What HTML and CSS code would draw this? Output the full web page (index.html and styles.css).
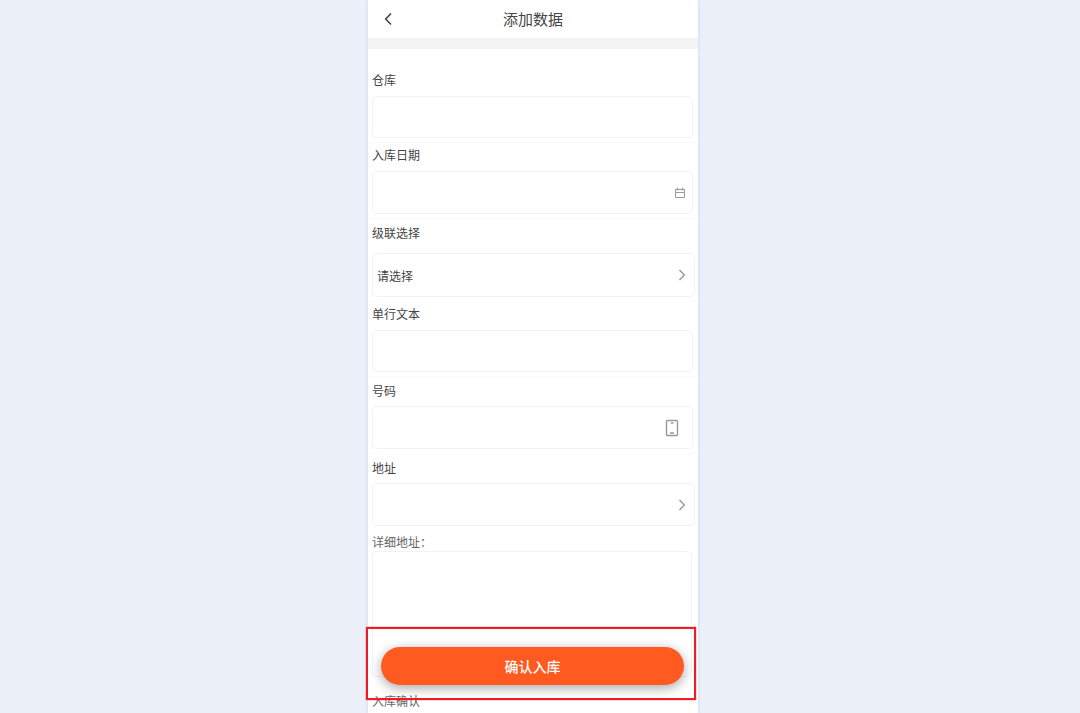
FILE: index.html
```html
<!DOCTYPE html>
<html lang="zh-CN">
<head>
<meta charset="utf-8">
<meta name="viewport" content="width=device-width, initial-scale=1">
<title>添加数据</title>
<link rel="stylesheet" href="styles.css">
</head>
<body>
<main class="phone">
  <header class="topbar">
    <button class="back" type="button" aria-label="返回">
      <svg width="8" height="14" viewBox="0 0 8 14"><path d="M7 1.5 1.7 7 7 12.5"/></svg>
    </button>
    <h1 class="title">添加数据</h1>
  </header>
  <form class="form">
    <div class="field field-first">
      <label class="label" for="warehouse">仓库</label>
      <div class="box"><input class="input" id="warehouse" type="text"></div>
    </div>
    <div class="field">
      <label class="label" for="date">入库日期</label>
      <div class="box box-tall">
        <input class="input" id="date" type="text">
        <svg class="icon icon-date" width="12" height="12" viewBox="0 0 12 12"><path d="M1.5 2.5h9v8h-9zM1.5 5.5h9M3.5 .5v3M8.5 .5v3"/></svg>
      </div>
    </div>
    <div class="field field-roomy field-cascade">
      <label class="label" for="cascade">级联选择</label>
      <div class="box box-select">
        <select class="input" id="cascade"><option>请选择</option></select>
        <svg class="icon icon-arrow" width="8" height="12" viewBox="0 0 8 12"><path d="M1.5 1 6.3 6 1.5 11"/></svg>
      </div>
    </div>
    <div class="field">
      <label class="label" for="line">单行文本</label>
      <div class="box"><input class="input" id="line" type="text"></div>
    </div>
    <div class="field field-roomy">
      <label class="label" for="number">号码</label>
      <div class="box box-tall">
        <input class="input" id="number" type="tel">
        <svg class="icon icon-phone" width="14" height="18" viewBox="0 0 14 18"><rect x="1.5" y="1.5" width="11" height="15" rx="1"/><path d="M6 4h2.5M5 14h4"/></svg>
      </div>
    </div>
    <div class="field field-roomy field-last">
      <label class="label" for="address">地址</label>
      <div class="box box-tall box-select">
        <select class="input" id="address"><option></option></select>
        <svg class="icon icon-arrow" width="8" height="12" viewBox="0 0 8 12"><path d="M1.5 1 6.3 6 1.5 11"/></svg>
      </div>
      <div class="detail-group">
        <label class="label label-detail" for="detail">详细地址：</label>
        <textarea class="detail" id="detail"></textarea>
      </div>
    </div>
    <p class="label confirm-label">入库确认</p>
  </form>
  <div class="highlight">
    <button class="submit" type="button">确认入库</button>
  </div>
</main>
</body>
</html>
```
FILE: styles.css
```css
* { box-sizing: border-box; }

body {
  margin: 0;
  padding-right: 14px;
  background: #ebf0f9;
  color: #444;
  font-family: "Noto Sans CJK SC", sans-serif;
  font-size: 12px;
  font-weight: 400;
}

.phone {
  position: relative;
  max-width: 330px;
  min-height: 100vh;
  margin: 0 auto;
  background: #fff;
  box-shadow: 0 0 4px rgba(90, 110, 150, 0.2);
}

.topbar {
  display: grid;
  grid-template-columns: 40px 1fr 40px;
  align-items: center;
  height: 49px;
  border-bottom: 11px solid #f3f3f3;
}

.back {
  display: flex;
  justify-content: center;
  padding: 0;
  border: 0;
  background: none;
}

.back svg { fill: none; stroke: #444; stroke-width: 1.6; }

.title {
  margin: 0;
  font-size: 15px;
  font-weight: 400;
  line-height: 38px;
  text-align: center;
  color: #444;
}

.field {
  display: flex;
  flex-direction: column;
  gap: 7px;
  padding: 3px 5px 4px 4px;
  border-bottom: 1px solid #fafafa;
}

.field-first { padding-top: 22px; }
.field-roomy { padding-top: 5px; gap: 6px; }
.field-cascade { gap: 11px; }
.field-last { border-bottom: 0; }

.label {
  line-height: 18px;
  color: #444;
}

.box {
  display: flex;
  align-items: center;
  height: 42px;
  border: 1px solid #f2f2f2;
  border-radius: 5px;
}

.box-tall { height: 43px; }

.box-select {
  height: 44px;
  margin-right: -2px;
}

.box-tall.box-select { height: 43px; }

.input {
  flex: 1;
  min-width: 0;
  height: 100%;
  padding: 0 4px;
  border: 0;
  outline: 0;
  background: none;
  appearance: none;
  font: inherit;
  color: #444;
}

.icon {
  flex: none;
  fill: none;
  stroke: #999;
}

.icon-date { margin-right: 6px; }
.icon-arrow { margin-right: 8px; stroke-width: 1.4; }
.icon-phone { margin-right: 13px; stroke-width: 1.4; }

.detail-group {
  display: flex;
  flex-direction: column;
  padding: 1px 1px 0 0;
}

.label-detail { color: #666; }

.detail {
  height: 126px;
  margin: 0;
  padding: 4px;
  border: 1px solid #f2f2f2;
  border-radius: 5px;
  outline: 0;
  resize: none;
  font: inherit;
}

.confirm-label {
  margin: 0;
  padding: 11px 4px 0;
  color: #666;
}

.highlight {
  position: absolute;
  right: 2px;
  bottom: 13px;
  left: -2px;
  padding: 18px 10px 13px 13px;
  border: 2px solid #ee1c25;
  box-shadow: 0 0 1px #ee1c25;
}

.submit {
  display: block;
  width: 100%;
  height: 38px;
  padding: 0;
  border: 0;
  border-radius: 19px;
  background: #ff5a1f;
  box-shadow: 0 3px 12px rgba(0, 0, 0, 0.35);
  color: #fff;
  font: inherit;
  font-size: 14px;
  font-weight: 500;
}
```
